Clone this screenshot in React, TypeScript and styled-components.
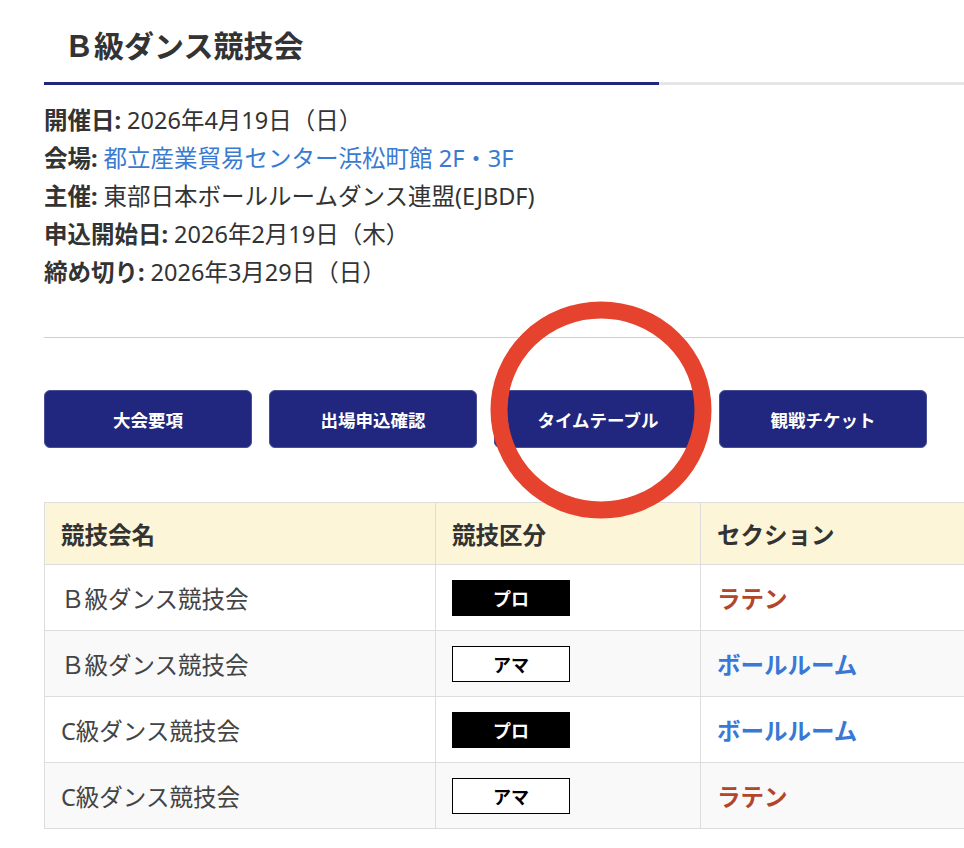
import styled, { createGlobalStyle } from 'styled-components'

const GlobalStyle = createGlobalStyle`
    html, body {
        margin: 0;
        padding: 0;
        background: #ffffff;
    }
    body {
        font-family: "Noto Sans", "Noto Sans CJK JP", sans-serif;
        color: #333333;
        overflow-x: hidden;
    }
`

const Page = styled.div`
    position: relative;
    width: 964px;
    min-height: 848px;
    padding-left: 44px;
    box-sizing: border-box;
    overflow: hidden;
`

const Title = styled.h1`
    margin: 28px 0 18px;
    padding-left: 20px;
    font-size: 30px;
    line-height: 36px;
    font-weight: 700;
    color: #333333;
`

const Underline = styled.div`
    display: flex;
    height: 3px;
    background: #e6e6e6;
`

const UnderlineAccent = styled.div`
    width: 615px;
    background: #20277c;
`

const InfoList = styled.dl`
    margin: 16px 0 0;
`

const InfoRow = styled.div`
    display: flex;
    font-size: 23.5px;
    line-height: 38px;
    color: #333333;
`

const Label = styled.dt`
    font-weight: 700;
    margin-right: 6px;
`

interface valueProps {
    link?: boolean
}

const Value = styled.dd`
    margin: 0;
    color: ${(props: valueProps) => props.link ? "#3a7ad0" : "#333333"};
`

const Divider = styled.hr`
    margin: 46px 0 0;
    border: none;
    height: 1px;
    background: #cfcfcf;
`

const ButtonRow = styled.div`
    display: flex;
    gap: 17px;
    margin-top: 52px;
`

const NavButton = styled.button`
    width: 208px;
    height: 58px;
    border-radius: 6px;
    border: 1px solid #4a4f95;
    background: #21277f;
    color: #ffffff;
    font-family: "Noto Sans CJK JP", sans-serif;
    font-size: 17.5px;
    font-weight: 700;
    cursor: pointer;
`

const Table = styled.table`
    margin-top: 54px;
    width: 940px;
    border-collapse: collapse;
    table-layout: fixed;
`

const HeadCell = styled.th`
    height: 61px;
    padding: 0 16px;
    text-align: left;
    background: #fdf5d8;
    border: 1px solid #dddddd;
    font-size: 23.5px;
    font-weight: 700;
    color: #333333;
`

interface rowProps {
    striped: boolean
}

const Row = styled.tr`
    background: ${(props: rowProps) => props.striped ? "#f9f9f9" : "#ffffff"};
`

const Cell = styled.td`
    height: 65px;
    padding: 0 16px;
    border: 1px solid #dddddd;
    font-size: 23.5px;
    color: #444444;
`

interface badgeProps {
    pro: boolean
}

const Badge = styled.span`
    display: flex;
    align-items: center;
    justify-content: center;
    width: 118px;
    height: 36px;
    box-sizing: border-box;
    border: 1px solid #000000;
    background: ${(props: badgeProps) => props.pro ? "#000000" : "#ffffff"};
    color: ${(props: badgeProps) => props.pro ? "#ffffff" : "#000000"};
    font-size: 18px;
    font-weight: 700;
`

interface sectionProps {
    latin: boolean
}

const Section = styled.span`
    font-weight: 700;
    color: ${(props: sectionProps) => props.latin ? "#b2462a" : "#3a78d6"};
`

const Mark = styled.svg`
    position: absolute;
    left: 489px;
    top: 301px;
    pointer-events: none;
`

const info = [
    { label: "開催日:", value: "2026年4月19日（日）" },
    { label: "会場:", value: "都立産業貿易センター浜松町館 2F・3F", link: true },
    { label: "主催:", value: "東部日本ボールルームダンス連盟(EJBDF)" },
    { label: "申込開始日:", value: "2026年2月19日（木）" },
    { label: "締め切り:", value: "2026年3月29日（日）" },
]

const buttons = ["大会要項", "出場申込確認", "タイムテーブル", "観戦チケット"]

const rows = [
    { name: "Ｂ級ダンス競技会", pro: true, latin: true },
    { name: "Ｂ級ダンス競技会", pro: false, latin: false },
    { name: "C級ダンス競技会", pro: true, latin: false },
    { name: "C級ダンス競技会", pro: false, latin: true },
]

export default function App() {
    return (
        <>
            <GlobalStyle />
            <Page>
                <Title>Ｂ級ダンス競技会</Title>
                <Underline>
                    <UnderlineAccent />
                </Underline>
                <InfoList>
                    {info.map((item) => (
                        <InfoRow key={item.label}>
                            <Label>{item.label}</Label>
                            <Value link={item.link}>{item.value}</Value>
                        </InfoRow>
                    ))}
                </InfoList>
                <Divider />
                <ButtonRow>
                    {buttons.map((b) => <NavButton key={b}>{b}</NavButton>)}
                </ButtonRow>
                <Table>
                    <colgroup>
                        <col style={{ width: 391 }} />
                        <col style={{ width: 265 }} />
                        <col />
                    </colgroup>
                    <thead>
                        <tr>
                            <HeadCell>競技会名</HeadCell>
                            <HeadCell>競技区分</HeadCell>
                            <HeadCell>セクション</HeadCell>
                        </tr>
                    </thead>
                    <tbody>
                        {rows.map((r, i) => (
                            <Row key={i} striped={i % 2 === 1}>
                                <Cell>{r.name}</Cell>
                                <Cell>
                                    <Badge pro={r.pro}>{r.pro ? "プロ" : "アマ"}</Badge>
                                </Cell>
                                <Cell>
                                    <Section latin={r.latin}>{r.latin ? "ラテン" : "ボールルーム"}</Section>
                                </Cell>
                            </Row>
                        ))}
                    </tbody>
                </Table>
                {/* red highlight ring drawn over the timetable button */}
                <Mark width="224" height="218" viewBox="0 0 224 218">
                    <ellipse cx="112" cy="109" rx="102" ry="100" fill="none" stroke="#e5432d" strokeWidth="17" />
                </Mark>
            </Page>
        </>
    )
}
